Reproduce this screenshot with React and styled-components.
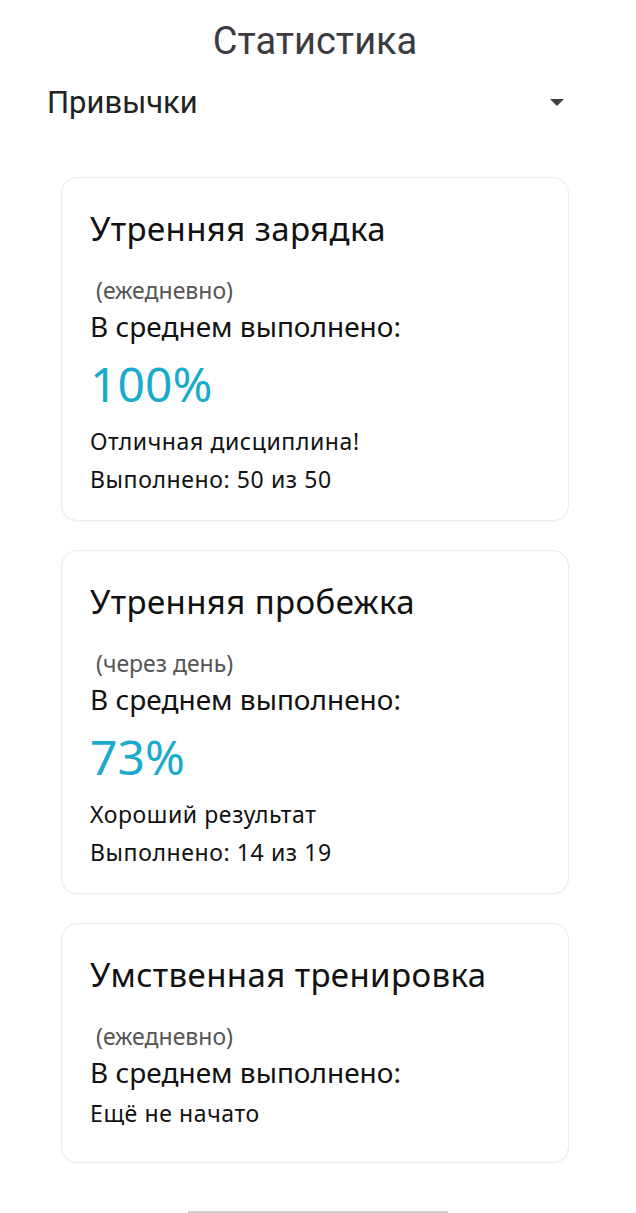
import React from "react";
import styled, { createGlobalStyle } from "styled-components";

const habits = [
  {
    name: "Утренняя зарядка",
    period: "ежедневно",
    percent: 100,
    verdict: "Отличная дисциплина!",
    done: 50,
    total: 50,
  },
  {
    name: "Утренняя пробежка",
    period: "через день",
    percent: 73,
    verdict: "Хороший результат",
    done: 14,
    total: 19,
  },
  {
    name: "Умственная тренировка",
    period: "ежедневно",
    percent: null,
  },
];

const HabitCard = ({ habit }) => {
  const started = habit.percent !== null;
  return (
    <Card $short={!started}>
      <CardTitle>{habit.name}</CardTitle>
      <Period> ({habit.period})</Period>
      <AvgLabel>В среднем выполнено:</AvgLabel>
      {started ? (
        <>
          <Percent>{habit.percent}%</Percent>
          <Note $gap="10px">{habit.verdict}</Note>
          <Note>
            Выполнено: {habit.done} из {habit.total}
          </Note>
        </>
      ) : (
        <Note $gap="4px">Ещё не начато</Note>
      )}
    </Card>
  );
};

const App = () => {
  return (
    <>
      <GlobalStyle />
      <Screen>
        <Title>Статистика</Title>
        <Picker>
          <span>Привычки</span>
          <Caret />
        </Picker>
        <CardList>
          {habits.map((h) => (
            <HabitCard key={h.name} habit={h} />
          ))}
        </CardList>
        <HomeBar />
      </Screen>
    </>
  );
};

export default App;

const GlobalStyle = createGlobalStyle`
  body {
    margin: 0;
    background: #ffffff;
    font-family: "Noto Sans", sans-serif;
  }
`;

const Screen = styled.div`
  display: flex;
  flex-direction: column;
  width: 636px;
  min-height: 1213px;
`;

const Title = styled.h1`
  margin: 0;
  padding-top: 19px;
  height: 44px;
  line-height: 44px;
  text-align: center;
  padding-right: 6px;
  font-family: Roboto, sans-serif;
  font-weight: 400;
  font-size: 38px;
  color: #3b3b40;
`;

const Picker = styled.div`
  display: flex;
  align-items: center;
  justify-content: space-between;
  height: 40px;
  margin-top: 19px;
  padding: 0 72px 0 47px;
  font-family: Roboto, sans-serif;
  font-size: 31px;
  color: #222;
`;

const Caret = styled.div`
  width: 0;
  height: 0;
  border-left: 7px solid transparent;
  border-right: 7px solid transparent;
  border-top: 7px solid #404040;
`;

const CardList = styled.div`
  display: flex;
  flex-direction: column;
  gap: 29px;
  margin: 55px 0 0 61px;
  width: 508px;
`;

const Card = styled.div`
  box-sizing: border-box;
  height: ${(p) => (p.$short ? "240px" : "344px")};
  padding: 30px 28px 0;
  border: 1px solid #ececec;
  border-radius: 16px;
  box-shadow: 0 1px 2px rgba(0, 0, 0, 0.04);
  background: #fff;
  color: #111;
`;

const CardTitle = styled.div`
  font-size: 33px;
  line-height: 42px;
  letter-spacing: 0.4px;
`;

const Period = styled.div`
  margin-top: 25px;
  font-size: 23px;
  line-height: 30px;
  color: #555;
  white-space: pre;
`;

const AvgLabel = styled.div`
  margin-top: 3px;
  font-size: 28px;
  line-height: 36px;
`;

const Percent = styled.div`
  margin-top: 12px;
  font-size: 48px;
  line-height: 56px;
  color: #1aabcc;
`;

const Note = styled.div`
  margin-top: ${(p) => p.$gap || "0"};
  font-size: 23px;
  line-height: 38px;
  letter-spacing: 0.6px;
`;

const HomeBar = styled.div`
  margin: 48px auto 0;
  width: 260px;
  height: 2px;
  background: #cfcfcf;
`;
